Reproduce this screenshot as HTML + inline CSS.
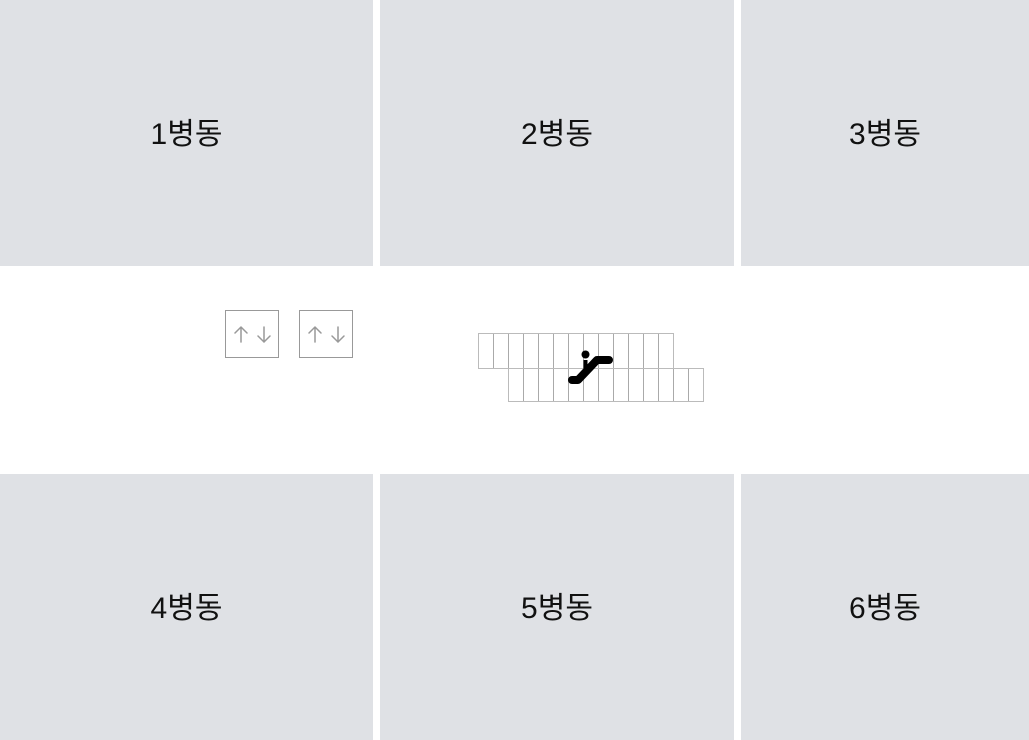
<!DOCTYPE html>
<html><head><meta charset="utf-8"><style>
body{margin:0;width:1029px;height:740px;background:#fff;position:relative;overflow:hidden;font-family:"Liberation Sans","Noto Sans CJK KR",sans-serif}
.p{position:absolute;background:#dfe1e5;display:flex;align-items:center;justify-content:center;font-size:30px;color:#111;padding-bottom:4px;box-sizing:border-box}
</style></head><body>
<div class="p" style="left:0;top:0;width:373px;height:266px">1병동</div>
<div class="p" style="left:380px;top:0;width:354px;height:266px">2병동</div>
<div class="p" style="left:741px;top:0;width:288px;height:266px">3병동</div>
<div class="p" style="left:0;top:474px;width:373px;height:266px">4병동</div>
<div class="p" style="left:380px;top:474px;width:354px;height:266px">5병동</div>
<div class="p" style="left:741px;top:474px;width:288px;height:266px">6병동</div>
<svg style="position:absolute;left:0;top:0" width="1029" height="740">
<g fill="none" stroke="#999" stroke-width="1.5" stroke-linecap="round">
<rect x="225.5" y="310.5" width="53" height="47" stroke-width="1" stroke="#999"/>
<rect x="299.5" y="310.5" width="53" height="47" stroke-width="1" stroke="#999"/>
<path d="M241 342V327M235 333l6-6 6 6M264 327v15M258 336l6 6 6-6"/>
<path d="M315 342V327M309 333l6-6 6 6M338 327v15M332 336l6 6 6-6"/>
</g>
<g fill="none" stroke="#bbb" stroke-width="1">
<path d="M478.5 333.5h195v35h-195z M508.5 368.5h195v33h-195z"/>
</g>
<g stroke="#aaa" stroke-width="1">
<path d="M493.5 334v34M508.5 334v34M523.5 334v34M538.5 334v34M553.5 334v34M568.5 334v34M583.5 334v34M598.5 334v34M613.5 334v34M628.5 334v34M643.5 334v34M658.5 334v34"/>
<path d="M523.5 369v32M538.5 369v32M553.5 369v32M568.5 369v32M583.5 369v32M598.5 369v32M613.5 369v32M628.5 369v32M643.5 369v32M658.5 369v32M673.5 369v32M688.5 369v32"/>
</g>
<circle cx="585.5" cy="354.5" r="4" fill="#000"/>
<path d="M585.5 360v12" stroke="#000" stroke-width="4"/>
<path d="M572 380h6l19-20h12" stroke="#000" stroke-width="8" stroke-linecap="round" stroke-linejoin="round" fill="none"/>
</svg>
</body></html>
